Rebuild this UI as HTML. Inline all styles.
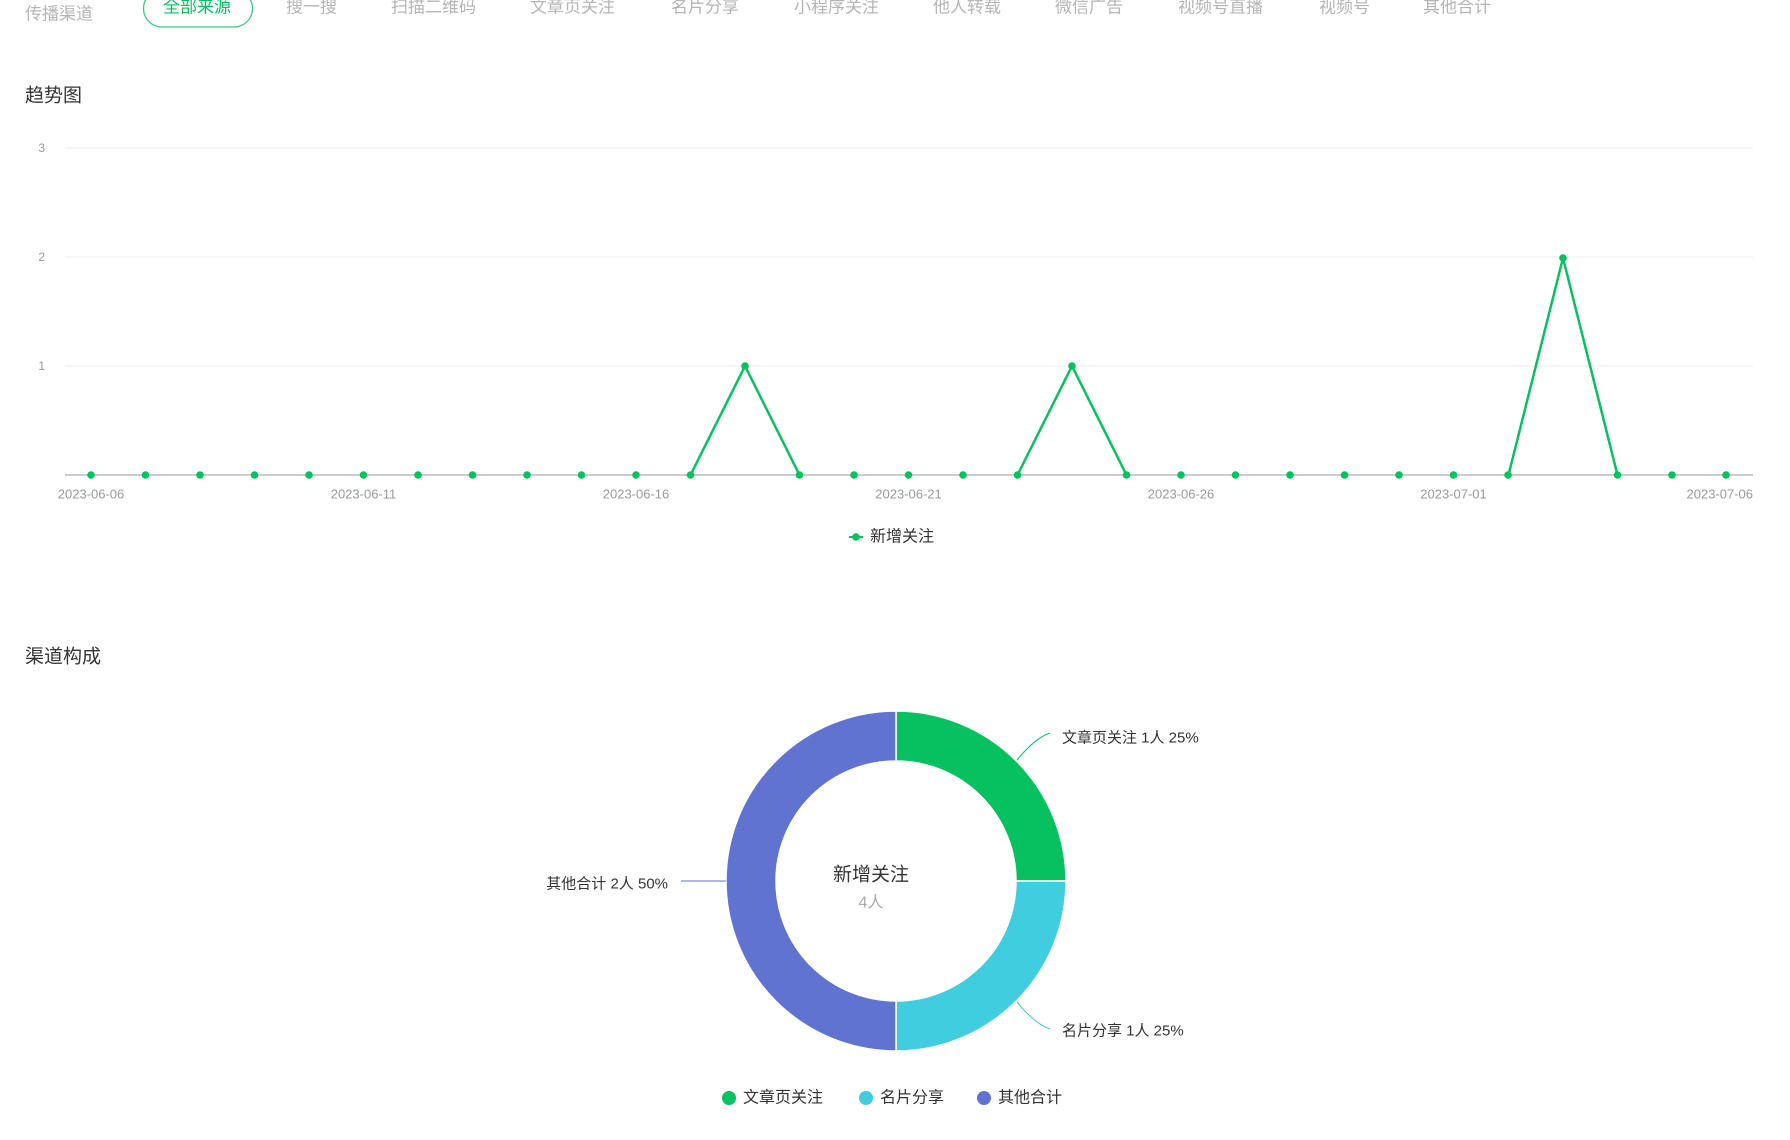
<!DOCTYPE html>
<html><head><meta charset="utf-8"><style>
body{margin:0;width:1790px;height:1140px;background:#fff;overflow:hidden;font-family:"Liberation Sans","Noto Sans CJK SC",sans-serif;}
svg{display:block}
</style></head><body>
<svg width="1790" height="1140" xmlns="http://www.w3.org/2000/svg" font-family="Liberation Sans, Noto Sans CJK SC, sans-serif">
<g font-size="17" fill="#b5b5b5" dominant-baseline="central">
<text x="25" y="14">传播渠道</text>
<rect x="143.5" y="-10" width="109" height="37" rx="18.5" fill="none" stroke="#3dcb7e" stroke-width="1.3"/>
<text x="163" y="7" fill="#07c160">全部来源</text>
<text x="286" y="7">搜一搜</text>
<text x="391" y="7">扫描二维码</text>
<text x="530" y="7">文章页关注</text>
<text x="671" y="7">名片分享</text>
<text x="794" y="7">小程序关注</text>
<text x="933" y="7">他人转载</text>
<text x="1055" y="7">微信广告</text>
<text x="1178" y="7">视频号直播</text>
<text x="1319" y="7">视频号</text>
<text x="1423" y="7">其他合计</text>
</g>
<text x="25" y="96" font-size="19" fill="#333" dominant-baseline="central">趋势图</text>
<g stroke="#eeeeee" stroke-width="1">
<line x1="65" y1="148" x2="1753" y2="148"/>
<line x1="65" y1="257" x2="1753" y2="257"/>
<line x1="65" y1="366" x2="1753" y2="366"/>
</g>
<line x1="65" y1="475" x2="1753" y2="475" stroke="#cccccc" stroke-width="2"/>
<g font-size="12" fill="#999" text-anchor="end" dominant-baseline="central">
<text x="45" y="148">3</text><text x="45" y="257">2</text><text x="45" y="366">1</text>
</g>
<g font-size="13" fill="#999" dominant-baseline="central" text-anchor="middle">
<text x="91" y="494">2023-06-06</text>
<text x="363.5" y="494">2023-06-11</text>
<text x="636" y="494">2023-06-16</text>
<text x="908.5" y="494">2023-06-21</text>
<text x="1181" y="494">2023-06-26</text>
<text x="1453.5" y="494">2023-07-01</text>
<text x="1753" y="494" text-anchor="end">2023-07-06</text>
</g>
<polyline fill="none" stroke="#07c160" stroke-width="2.5" points="690.5,475 745,366 799.5,475"/>
<polyline fill="none" stroke="#07c160" stroke-width="2.5" points="1017.5,475 1072,366 1126.5,475"/>
<polyline fill="none" stroke="#07c160" stroke-width="2.5" points="1508.5,475 1563,258 1617.5,475"/>
<g fill="#07c160">
<circle cx="91" cy="475" r="3.8"/><circle cx="145.5" cy="475" r="3.8"/><circle cx="200" cy="475" r="3.8"/><circle cx="254.5" cy="475" r="3.8"/><circle cx="309" cy="475" r="3.8"/><circle cx="363.5" cy="475" r="3.8"/><circle cx="418" cy="475" r="3.8"/><circle cx="472.5" cy="475" r="3.8"/><circle cx="527" cy="475" r="3.8"/><circle cx="581.5" cy="475" r="3.8"/><circle cx="636" cy="475" r="3.8"/><circle cx="690.5" cy="475" r="3.8"/><circle cx="745" cy="366" r="3.8"/><circle cx="799.5" cy="475" r="3.8"/><circle cx="854" cy="475" r="3.8"/><circle cx="908.5" cy="475" r="3.8"/><circle cx="963" cy="475" r="3.8"/><circle cx="1017.5" cy="475" r="3.8"/><circle cx="1072" cy="366" r="3.8"/><circle cx="1126.5" cy="475" r="3.8"/><circle cx="1181" cy="475" r="3.8"/><circle cx="1235.5" cy="475" r="3.8"/><circle cx="1290" cy="475" r="3.8"/><circle cx="1344.5" cy="475" r="3.8"/><circle cx="1399" cy="475" r="3.8"/><circle cx="1453.5" cy="475" r="3.8"/><circle cx="1508" cy="475" r="3.8"/><circle cx="1563" cy="258" r="3.8"/><circle cx="1617.5" cy="475" r="3.8"/><circle cx="1672" cy="475" r="3.8"/><circle cx="1726" cy="475" r="3.8"/>
</g>
<line x1="849" y1="537" x2="863" y2="537" stroke="#07c160" stroke-width="2"/>
<circle cx="856" cy="537" r="3.8" fill="#07c160"/>
<text x="870" y="537" font-size="16" fill="#333" dominant-baseline="central">新增关注</text>
<text x="25" y="657" font-size="19" fill="#333" dominant-baseline="central">渠道构成</text>
<path d="M896,711 A170,170 0 0 1 1066,881 L1016,881 A120,120 0 0 0 896,761 Z" fill="#07c160" stroke="#fff" stroke-width="1.5"/>
<path d="M1066,881 A170,170 0 0 1 896,1051 L896,1001 A120,120 0 0 0 1016,881 Z" fill="#40cde0" stroke="#fff" stroke-width="1.5"/>
<path d="M896,1051 A170,170 0 0 1 896,711 L896,761 A120,120 0 0 0 896,1001 Z" fill="#6173d1" stroke="#fff" stroke-width="1.5"/>
<path d="M1017,760 Q1035,738 1050,733" fill="none" stroke="#07c160" stroke-width="1"/>
<path d="M1017,1002 Q1035,1024 1050,1029" fill="none" stroke="#40cde0" stroke-width="1"/>
<line x1="681" y1="881" x2="726" y2="881" stroke="#6173d1" stroke-width="1"/>
<g font-size="15" fill="#333" dominant-baseline="central">
<text x="1062" y="738">文章页关注 1人 25%</text>
<text x="1062" y="1031">名片分享 1人 25%</text>
<text x="668" y="884" text-anchor="end">其他合计 2人 50%</text>
</g>
<text x="871" y="875" font-size="19" fill="#333" text-anchor="middle" dominant-baseline="central">新增关注</text>
<text x="871" y="903" font-size="16" fill="#aaa" text-anchor="middle" dominant-baseline="central">4人</text>
<circle cx="729" cy="1098" r="7" fill="#07c160"/>
<circle cx="866" cy="1098" r="7" fill="#40cde0"/>
<circle cx="984" cy="1098" r="7" fill="#6173d1"/>
<g font-size="16" fill="#333" dominant-baseline="central">
<text x="743" y="1098">文章页关注</text>
<text x="880" y="1098">名片分享</text>
<text x="998" y="1098">其他合计</text>
</g>
</svg>
</body></html>
